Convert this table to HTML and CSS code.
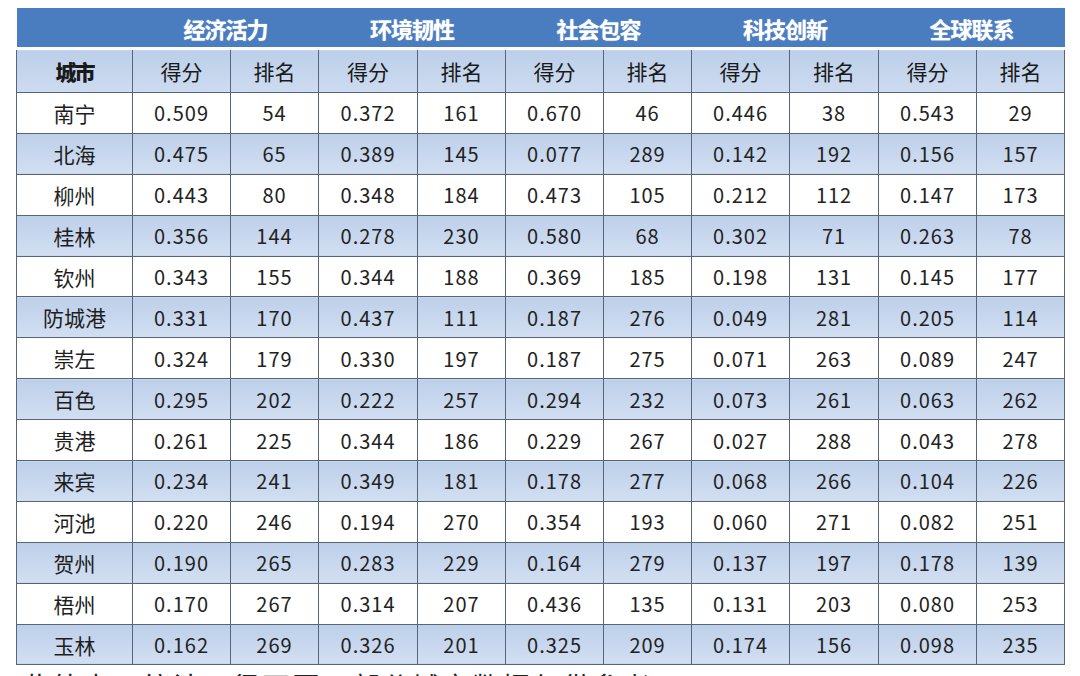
FILE: index.html
```html
<!DOCTYPE html>
<html lang="zh">
<head>
<meta charset="utf-8">
<title>广西城市发展指数</title>
<link rel="stylesheet" href="styles.css">
</head>
<body>
<div class="page">
<table class="data">
<colgroup>
<col class="c-city"><col class="c98"><col class="c88"><col class="c99"><col class="c88"><col class="c98"><col class="c88"><col class="c98"><col class="c89"><col class="c98"><col class="c88">
</colgroup>
<thead>
<tr class="band">
<th></th><th colspan="2">经济活力</th><th colspan="2">环境韧性</th><th colspan="2">社会包容</th><th colspan="2">科技创新</th><th colspan="2">全球联系</th>
</tr>
<tr class="sub">
<th class="city-h">城市</th><th>得分</th><th>排名</th><th>得分</th><th>排名</th><th>得分</th><th>排名</th><th>得分</th><th>排名</th><th>得分</th><th>排名</th>
</tr>
</thead>
<tbody>
<tr><td class="city">南宁</td><td>0.509</td><td>54</td><td>0.372</td><td>161</td><td>0.670</td><td>46</td><td>0.446</td><td>38</td><td>0.543</td><td>29</td></tr>
<tr class="alt"><td class="city">北海</td><td>0.475</td><td>65</td><td>0.389</td><td>145</td><td>0.077</td><td>289</td><td>0.142</td><td>192</td><td>0.156</td><td>157</td></tr>
<tr><td class="city">柳州</td><td>0.443</td><td>80</td><td>0.348</td><td>184</td><td>0.473</td><td>105</td><td>0.212</td><td>112</td><td>0.147</td><td>173</td></tr>
<tr class="alt"><td class="city">桂林</td><td>0.356</td><td>144</td><td>0.278</td><td>230</td><td>0.580</td><td>68</td><td>0.302</td><td>71</td><td>0.263</td><td>78</td></tr>
<tr><td class="city">钦州</td><td>0.343</td><td>155</td><td>0.344</td><td>188</td><td>0.369</td><td>185</td><td>0.198</td><td>131</td><td>0.145</td><td>177</td></tr>
<tr class="alt"><td class="city">防城港</td><td>0.331</td><td>170</td><td>0.437</td><td>111</td><td>0.187</td><td>276</td><td>0.049</td><td>281</td><td>0.205</td><td>114</td></tr>
<tr><td class="city">崇左</td><td>0.324</td><td>179</td><td>0.330</td><td>197</td><td>0.187</td><td>275</td><td>0.071</td><td>263</td><td>0.089</td><td>247</td></tr>
<tr class="alt"><td class="city">百色</td><td>0.295</td><td>202</td><td>0.222</td><td>257</td><td>0.294</td><td>232</td><td>0.073</td><td>261</td><td>0.063</td><td>262</td></tr>
<tr><td class="city">贵港</td><td>0.261</td><td>225</td><td>0.344</td><td>186</td><td>0.229</td><td>267</td><td>0.027</td><td>288</td><td>0.043</td><td>278</td></tr>
<tr class="alt"><td class="city">来宾</td><td>0.234</td><td>241</td><td>0.349</td><td>181</td><td>0.178</td><td>277</td><td>0.068</td><td>266</td><td>0.104</td><td>226</td></tr>
<tr><td class="city">河池</td><td>0.220</td><td>246</td><td>0.194</td><td>270</td><td>0.354</td><td>193</td><td>0.060</td><td>271</td><td>0.082</td><td>251</td></tr>
<tr class="alt"><td class="city">贺州</td><td>0.190</td><td>265</td><td>0.283</td><td>229</td><td>0.164</td><td>279</td><td>0.137</td><td>197</td><td>0.178</td><td>139</td></tr>
<tr><td class="city">梧州</td><td>0.170</td><td>267</td><td>0.314</td><td>207</td><td>0.436</td><td>135</td><td>0.131</td><td>203</td><td>0.080</td><td>253</td></tr>
<tr class="alt"><td class="city">玉林</td><td>0.162</td><td>269</td><td>0.326</td><td>201</td><td>0.325</td><td>209</td><td>0.174</td><td>156</td><td>0.098</td><td>235</td></tr>
</tbody>
</table>
<p class="note">此外由于统计口径不同，部分城市数据仅供参考。</p>
</div>
</body>
</html>
```
FILE: styles.css
```css
html, body {
  margin: 0;
  padding: 0;
  background: #ffffff;
  height: 676px;
  overflow: hidden;
}
.page {
  padding: 8px 0 0 16px;
}
.data {
  border-collapse: collapse;
  table-layout: fixed;
  width: 1048px;
  font-family: "Noto Sans CJK SC", sans-serif;
  color: #1e1e1e;
}
.c-city { width: 116px; }
.c98 { width: 98px; }
.c88 { width: 88px; }
.c99 { width: 99px; }
.c89 { width: 89px; }

.band th {
  height: 39px;
  padding: 0;
  background: #4a7dbf;
  color: #ffffff;
  font-size: 22px;
  font-weight: 700;
  letter-spacing: -1px;
  border-bottom: 3px solid #ffffff;
  text-shadow: 0 0 1px #d9e5f5;
}
.sub th {
  height: 42px;
  padding: 0;
  background: linear-gradient(#bccfe9, #cddbf0);
  font-size: 21px;
  font-weight: 400;
  color: #1a1a1a;
  border: 1.5px solid #56657a;
  border-top: none;
}
.sub th.city-h {
  font-weight: 900;
  letter-spacing: -2px;
}
.data td {
  height: 39.9px;
  padding: 0;
  text-align: center;
  border: 1.5px solid #56657a;
  font-family: "Noto Sans CJK SC", sans-serif;
  font-weight: 400;
  font-size: 20px;
  letter-spacing: 1px;
  color: #222222;
  background: #ffffff;
}
.data td.city {
  font-size: 21px;
  letter-spacing: 0;
  color: #1e1e1e;
}
.data tr.alt td {
  background: linear-gradient(#bdcfe9, #d2dff2);
}
.note {
  margin: 5px 0 0 6px;
  font-family: "Noto Sans CJK SC", sans-serif;
  font-size: 28px;
  line-height: 1.2;
  letter-spacing: 2px;
  color: #222222;
}
```
